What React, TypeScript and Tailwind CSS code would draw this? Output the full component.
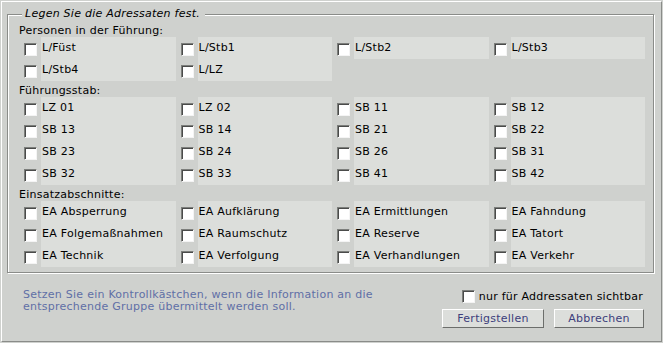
import React from "react";

type Section = {
  title: string;
  items: (string | null)[];
};

const sections: Section[] = [
  {
    title: "Personen in der Führung:",
    items: ["L/Füst", "L/Stb1", "L/Stb2", "L/Stb3", "L/Stb4", "L/LZ", null, null],
  },
  {
    title: "Führungsstab:",
    items: [
      "LZ 01", "LZ 02", "SB 11", "SB 12",
      "SB 13", "SB 14", "SB 21", "SB 22",
      "SB 23", "SB 24", "SB 26", "SB 31",
      "SB 32", "SB 33", "SB 41", "SB 42",
    ],
  },
  {
    title: "Einsatzabschnitte:",
    items: [
      "EA Absperrung", "EA Aufklärung", "EA Ermittlungen", "EA Fahndung",
      "EA Folgemaßnahmen", "EA Raumschutz", "EA Reserve", "EA Tatort",
      "EA Technik", "EA Verfolgung", "EA Verhandlungen", "EA Verkehr",
    ],
  },
];

const CheckBox = () => (
  <span className="block w-[13px] h-[13px] shrink-0 bg-white border border-t-[#7c7e7b] border-l-[#7c7e7b] border-r-[#f4f4f4] border-b-[#f4f4f4] shadow-[inset_1px_1px_0_#4a4b4a]" />
);

const Item = ({ label }: { label: string | null }) => {
  if (!label) return <div className="h-[22px]" />;
  return (
    <div className="flex h-[22px]">
      <div className="w-[22px] pl-[5px] pt-[6px]">
        <CheckBox />
      </div>
      <div className="flex-1 bg-[#dcdedb] pl-[1px] leading-[22px] whitespace-nowrap">
        {label}
      </div>
    </div>
  );
};

export default function App() {
  return (
    <div className="w-[663px] h-[343px] bg-[#cfd1ce] font-['DejaVu_Sans',sans-serif] text-[11px] tracking-[0.25px] text-black overflow-hidden">
      <div className="ml-[1px] mt-[1px] w-[661px] h-[341px] border border-t-white border-l-white border-r-[#8a8c89] border-b-[#8a8c89]">
        <fieldset className="ml-[5px] mt-[5px] w-[647px] border border-[#8a8c89] shadow-[inset_1px_1px_0_#fff,1px_1px_0_#fff] pl-[11px] pr-[8px] pb-[5px]">
          <legend className="ml-[3px] pl-[3px] pr-[5px] bg-[#cfd1ce] italic leading-[14px]">
            Legen Sie die Adressaten fest.
          </legend>
          {sections.map((s) => (
            <div key={s.title}>
              <div className="h-[16px] leading-[16px] pt-[2px] whitespace-nowrap">{s.title}</div>
              <div className="grid grid-cols-4">
                {s.items.map((it, i) => (
                  <Item key={i} label={it} />
                ))}
              </div>
            </div>
          ))}
        </fieldset>
        <div className="flex justify-between pl-[21px] pr-[17px] mt-[16px]">
          <p className="text-[#5f6fa6] leading-[12px] w-[400px]">
            Setzen Sie ein Kontrollkästchen, wenn die Information an die
            <br />
            entsprechende Gruppe übermittelt werden soll.
          </p>
          <div className="flex flex-col items-end">
            <div className="flex items-center gap-[4px] mt-[1px] pr-[1px]">
              <CheckBox />
              <span className="leading-[13px] whitespace-nowrap">nur für Addressaten sichtbar</span>
            </div>
            <div className="flex gap-[10px] mt-[6px]">
              <button className="w-[102px] h-[19px] bg-[#dcdedb] border border-t-white border-l-white border-r-[#6c6e6b] border-b-[#6c6e6b] text-[#3d3f7c] leading-[17px]">
                Fertigstellen
              </button>
              <button className="w-[90px] h-[19px] bg-[#dcdedb] border border-t-white border-l-white border-r-[#6c6e6b] border-b-[#6c6e6b] text-[#3d3f7c] leading-[17px]">
                Abbrechen
              </button>
            </div>
          </div>
        </div>
      </div>
    </div>
  );
}
